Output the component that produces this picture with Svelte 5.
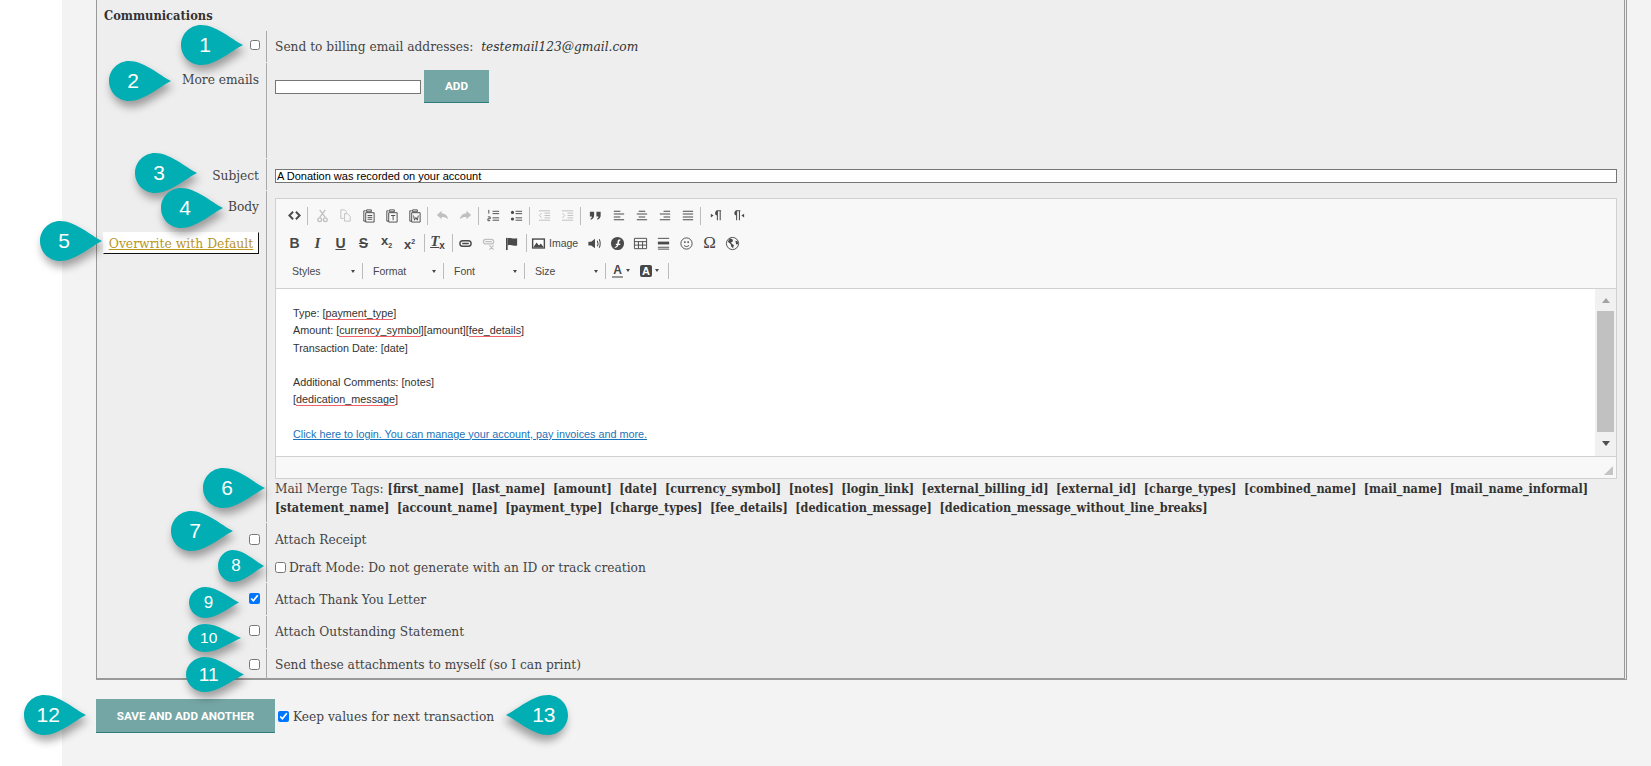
<script lang="ts">
  const INK = '#4a4a4a';

  // s = stroked path, f = filled path, t = real text glyph, off = greyed out
  const icons: Record<string, { s?: string; f?: string; w?: number; t?: string; sm?: string; off?: boolean; cls?: string }> = {
    source: { s: 'M6.500 4 2.500 8l4 4M9.500 4l4 4-4 4', w: 2 },
    cut: { s: 'M5 2l6 8M11 2l-6 8M3 12.500a2 2 0 1 0 4 0a2 2 0 1 0-4 0M9 12.500a2 2 0 1 0 4 0a2 2 0 1 0-4 0', off: true },
    copy: { s: 'M3 2h4l2 2v1M3 2v9h3M7 6h3l3 3v5H7z', off: true, w: 1 },
    paste: { s: 'M5 3H3v11h2M5 5h9v10H5zM6 2h5v2H6zM7 8h5M7 10h5M7 12h5', w: 1 },
    pastetext: { s: 'M5 3H3v11h2M5 5h9v10H5zM6 2h5v2H6zM7.500 8h4.500M9.700 8v5', w: 1 },
    pasteword: { s: 'M5 3H3v11h2M5 5h9v10H5zM6 2h5v2H6zM7 8l1 5 1.500-3 1.500 3 1-5', w: 1 },
    undo: { f: 'M7 3 2 7.500 7 12V9.500c3 0 5 .5 7 2.500-.5-4-3-6-7-6.300z', off: true },
    redo: { f: 'M9 3l5 4.500L9 12V9.500c-3 0-5 .5-7 2.500.5-4 3-6 7-6.300z', off: true },
    ol: { s: 'M7 3.500h7M7 6h7M7 10.500h7M7 13h7M3 2v4M2 9.500h2.500V11.500H2v2h2.500', w: 1 },
    ul: { s: 'M7 3.500h7M7 6h7M7 10.500h7M7 13h7', f: 'M2 4.700a1.700 1.700 0 1 0 3.400 0a1.700 1.700 0 1 0-3.400 0M2 11.700a1.700 1.700 0 1 0 3.400 0a1.700 1.700 0 1 0-3.400 0', w: 1 },
    outdent: { s: 'M2 3h12M8 5.500h6M8 8h6M8 10.500h6M2 13h12M5 5.500 2.500 8 5 10.500', w: 1, off: true },
    indent: { s: 'M2 3h12M8 5.500h6M8 8h6M8 10.500h6M2 13h12M2.500 5.500 5 8l-2.500 2.500', w: 1, off: true },
    quote: { f: 'M2 4h4.500v4c0 2-1 3.500-3.500 4.500l-.5-1c1-.5 1.700-1.500 1.700-2.500H2zM9 4h4.500v4c0 2-1 3.500-3.500 4.500l-.5-1c1-.5 1.700-1.500 1.700-2.500H9z' },
    left: { s: 'M3 3.500h7M3 6.500h11M3 9.500h7M3 12.500h11', w: 1.100 },
    center: { s: 'M5 3.500h7M3 6.500h11M5 9.500h7M3 12.500h11', w: 1.100 },
    right: { s: 'M7 3.500h7M3 6.500h11M7 9.500h7M3 12.500h11', w: 1.100 },
    justify: { s: 'M3 3.500h11M3 6.500h11M3 9.500h11M3 12.500h11', w: 1.100 },
    ltr: { s: 'M10 3v10M13 3v10M9 3h5', f: 'M10 3a2.500 2.500 0 0 0 0 5zM3 6l3 2-3 2z', w: 1.100 },
    rtl: { s: 'M6 3v10M9 3v10M5 3h5', f: 'M6 3a2.500 2.500 0 0 0 0 5zM14 6l-3 2 3 2z', w: 1.100 },
    bold: { t: 'B', cls: 'tb' },
    italic: { t: 'I', cls: 'ti' },
    underline: { t: 'U', cls: 'tu' },
    strike: { t: 'S', cls: 'ts' },
    sub: { t: 'x', sm: '2', cls: 'tx sub' },
    sup: { t: 'x', sm: '2', cls: 'tx sup' },
    clear: { t: 'T', sm: 'x', cls: 'tc' },
    link: { s: 'M5 5h6a3 3 0 0 1 0 6H5a3 3 0 0 1 0-6zM4.500 8h7', w: 1.500 },
    unlink: { s: 'M5 3.500h6a2.500 2.500 0 0 1 0 5H5a2.500 2.500 0 0 1 0-5zM4.500 6h7M9 10l4.500 4.500M13.500 10 9 14.500', w: 1.300, off: true },
    anchor: { s: 'M3 2v13', f: 'M4 2.500c3-1 5 1 10 0V10c-5 1-7-1-10 0z', w: 1.800 },
    audio: { s: 'M11 5c1 2 1 4 0 6M13 3.500c1.500 3 1.500 6 0 9', f: 'M1.500 6h3l4-3v10l-4-3h-3z', w: 1.100 },
    flash: { f: 'M1 8a7 7 0 1 0 14 0a7 7 0 1 0-14 0M11 3.500C7 3.500 8.500 6.800 7.700 8.200H6.200v1.500h1.200C7 11 6.200 11.400 5 11.700v1c3-.2 3.500-1.700 4-3H11V8.200H9.500c.3-1.500 0-3 1.500-3.200z' },
    table: { s: 'M1.500 2.500h13v11h-13zM1.500 6h13M1.500 9.700h13M5.800 6v7.500M10.200 6v7.500', w: 1 },
    hr: { s: 'M2 2.500h12M2 12h12M2 14h12', f: 'M2 6h12v3H2z', w: 1 },
    smile: { s: 'M2 8a6 6 0 1 0 12 0a6 6 0 1 0-12 0M5.300 10c1.400 1.600 4 1.600 5.400 0', f: 'M5.500 5.500h1.500v2H5.500zM9 5.500h1.500v2H9z', w: 1 },
    omega: { t: 'Ω', cls: 'to' },
    globe: { s: 'M1.500 8a6.500 6.500 0 1 0 13 0a6.500 6.500 0 1 0-13 0', f: 'M5 2.500l3 1 .5 2-2 1.500 1 1.500 2 1-1 3.500-2-2-.5-2.500L3 6zM11 5l2.500.5.500 3-2 .5z', w: 1 },
  };

  const rowOne = ['source', '|', 'cut', 'copy', 'paste', 'pastetext', 'pasteword', '|', 'undo', 'redo', '|', 'ol', 'ul', '|', 'outdent', 'indent', '|', 'quote', 'left', 'center', 'right', 'justify', '|', 'ltr', 'rtl'];
  const rowTwoA = ['bold', 'italic', 'underline', 'strike', 'sub', 'sup', '|', 'clear', '|', 'link', 'unlink', 'anchor', '|'];
  const rowTwoB = ['audio', 'flash', 'table', 'hr', 'smile', 'omega', 'globe'];
  const combos = ['Styles', 'Format', 'Font', 'Size'];

  const firstTags = ['first_name', 'last_name', 'amount', 'date', 'currency_symbol', 'notes', 'login_link', 'external_billing_id', 'external_id', 'charge_types', 'combined_name', 'mail_name', 'mail_name_informal'];
  const secondTags = ['statement_name', 'account_name', 'payment_type', 'charge_types', 'fee_details', 'dedication_message', 'dedication_message_without_line_breaks'];

  // callouts sit on top of the form, their place is the content
  const badges = [
    { n: 1, x: 181, y: 25, w: 62, h: 40, fs: 21 },
    { n: 2, x: 109, y: 61, w: 62, h: 40, fs: 21 },
    { n: 3, x: 135, y: 153, w: 62, h: 40, fs: 21 },
    { n: 4, x: 161, y: 188, w: 62, h: 40, fs: 21 },
    { n: 5, x: 40, y: 221, w: 62, h: 40, fs: 21 },
    { n: 6, x: 203, y: 468, w: 62, h: 40, fs: 21 },
    { n: 7, x: 171, y: 511, w: 62, h: 40, fs: 21 },
    { n: 8, x: 218, y: 550, w: 46, h: 32, fs: 17 },
    { n: 9, x: 189, y: 587, w: 50, h: 31, fs: 17 },
    { n: 10, x: 188, y: 624, w: 53, h: 28, fs: 15.500 },
    { n: 11, x: 186, y: 657, w: 58, h: 35, fs: 19 },
    { n: 12, x: 24, y: 695, w: 62, h: 40, fs: 21 },
    { n: 13, x: 506, y: 695, w: 62, h: 40, fs: 21, flip: true },
  ];
</script>

{#snippet toolIcon(name: string)}
  {@const ic = icons[name]}
  <span class="tool" class:off={ic.off}>
    {#if ic.t}
      <span class={'glyph ' + ic.cls}>{ic.t}{#if ic.sm}<small>{ic.sm}</small>{/if}</span>
    {:else}
      <svg width="15" height="15" viewBox="0 0 16 16">
        {#if ic.f}<path d={ic.f} fill={INK} fill-rule="evenodd" />{/if}
        {#if ic.s}<path d={ic.s} fill="none" stroke={INK} stroke-width={ic.w ?? 1.4} />{/if}
      </svg>
    {/if}
  </span>
{/snippet}

<div class="root">
  <div class="page">
    <div class="panel">
      <div class="title">Communications</div>

      <div class="row r1">
        <div class="label"><input type="checkbox" class="rowcheck small" /></div>
        <div class="cell">Send to billing email addresses: &nbsp;<em>testemail123@gmail.com</em></div>
      </div>

      <div class="row r2">
        <div class="label">More emails</div>
        <div class="cell email-cell">
          <input type="text" class="email-input" />
          <button class="add-btn">ADD</button>
        </div>
      </div>

      <div class="row r3">
        <div class="label">Subject</div>
        <div class="cell">
          <input type="text" class="subject-input" value="A Donation was recorded on your account" />
        </div>
      </div>

      <div class="row r4">
        <div class="label body-label">
          <div>Body</div>
          <button class="overwrite">Overwrite with Default</button>
        </div>
        <div class="cell">
          <div class="editor">
            <div class="toolbar">
              <div class="tb-row one">
                {#each rowOne as item}
                  {#if item === '|'}<span class="sep"></span>{:else}{@render toolIcon(item)}{/if}
                {/each}
              </div>
              <div class="tb-row two">
                {#each rowTwoA as item}
                  {#if item === '|'}<span class="sep"></span>{:else}{@render toolIcon(item)}{/if}
                {/each}
                <span class="image-btn">
                  <svg width="15" height="15" viewBox="0 0 16 16">
                    <path d="M1 2.500h14v11H1z" fill={INK} />
                    <path d="M2.500 4h11v8.500h-11z" fill="#fff" />
                    <path d="M2.500 12 6 7l2.500 3 2-2 3 4v.5h-11z" fill={INK} />
                  </svg>
                  <span class="image-text">Image</span>
                </span>
                {#each rowTwoB as item}{@render toolIcon(item)}{/each}
              </div>
              <div class="tb-row three">
                {#each combos as combo}
                  <span class="combo">{combo}<i class="caret"></i></span><span class="sep flat"></span>
                {/each}
                <span class="color-btn first"><span class="text-a">A</span><i class="caret"></i></span>
                <span class="color-btn"><span class="bg-a">A</span><i class="caret"></i></span>
                <span class="sep flat"></span>
              </div>
            </div>

            <div class="content">
              <div class="text">
                <p>Type: [<u>payment_type</u>]</p>
                <p>Amount: [<u>currency_symbol</u>][amount][<u>fee_details</u>]</p>
                <p>Transaction Date: [date]</p>
                <p>&nbsp;</p>
                <p>Additional Comments: [notes]</p>
                <p>[<u>dedication_message</u>]</p>
                <p>&nbsp;</p>
                <p><a href="#login">Click here to login. You can manage your account, pay invoices and more.</a></p>
              </div>
              <div class="scrollbar">
                <i class="arrow up"></i>
                <div class="thumb"></div>
                <i class="arrow down"></i>
              </div>
            </div>

            <div class="statusbar">
              <svg width="9" height="9" viewBox="0 0 9 9"><path d="M9 0v9H0z" fill="#c4c4c4" /></svg>
            </div>
          </div>

          <div class="tags">
            <span class="tags-label">Mail Merge Tags:</span>
            {#each firstTags as tag}<b>[{tag}]</b>{/each}<br />
            {#each secondTags as tag}<b>[{tag}]</b>{/each}
          </div>
        </div>
      </div>

      <div class="row r5">
        <div class="label"><input type="checkbox" class="rowcheck" /></div>
        <div class="cell">
          <div class="line-a">Attach Receipt</div>
          <label class="line-b"><input type="checkbox" />Draft Mode: Do not generate with an ID or track creation</label>
        </div>
      </div>

      <div class="row r6">
        <div class="label"><input type="checkbox" class="rowcheck" checked /></div>
        <div class="cell">Attach Thank You Letter</div>
      </div>

      <div class="row r6 r6b">
        <div class="label"><input type="checkbox" class="rowcheck" /></div>
        <div class="cell">Attach Outstanding Statement</div>
      </div>

      <div class="row r7">
        <div class="label"><input type="checkbox" class="rowcheck" /></div>
        <div class="cell">Send these attachments to myself (so I can print)</div>
      </div>
    </div>

    <div class="footer">
      <button class="save-btn">SAVE AND ADD ANOTHER</button>
      <label class="keep"><input type="checkbox" checked />Keep values for next transaction</label>
    </div>
  </div>

  {#each badges as b}
    <div class="badge" style="left:{b.x}px;top:{b.y}px;width:{b.w}px;height:{b.h}px">
      <svg class:flip={b.flip} viewBox="0 0 62 40" preserveAspectRatio="none">
        <path d="M62 20C50 14 35 0 20 0 9 0 0 9 0 20s9 20 20 20c15 0 30-14 42-20z" fill="#00aeb3" />
      </svg>
      <span class:flipnum={b.flip} style="font-size:{b.fs}px">{b.n}</span>
    </div>
  {/each}
</div>

<style>
  :global(body) {
    margin: 0;
    background: #fff;
  }

  .root {
    position: relative;
    height: 766px;
    overflow: hidden;
  }

  .page {
    margin-left: 62px;
    height: 766px;
    background: #f3f3f3;
    padding-left: 34px;
    font-family: 'DejaVu Serif', 'Liberation Serif', serif;
    font-stretch: condensed;
    font-size: 13.600px;
    color: #444;
    box-sizing: border-box;
  }

  .panel {
    width: 1531px;
    height: 680px;
    box-sizing: border-box;
    background: #eee;
    border-left: 1px solid #999;
    border-right: 3px double #999;
    border-bottom: 2px solid #999;
  }

  .title {
    height: 31px;
    padding: 8px 0 0 7px;
    box-sizing: border-box;
    font-size: 12.750px;
    font-weight: 700;
    color: #333;
  }

  .row {
    display: grid;
    grid-template-columns: 169px 1fr;
    margin-bottom: 1px;
  }

  .label {
    text-align: right;
    padding-right: 6px;
  }

  .cell {
    border-left: 1px solid #aaa;
    padding-left: 8px;
    padding-right: 7px;
  }

  .rowcheck {
    display: block;
    width: 11px;
    height: 11px;
    margin: 0 0 0 auto;
  }

  .rowcheck.small {
    width: 10px;
    height: 10px;
  }

  .r1 { height: 31px; }
  .r1 .label { padding-top: 9px; }
  .r1 .cell { padding-top: 7px; line-height: 16px; }
  .r1 em { color: #333; }

  .r2 { height: 95px; }
  .r2 .label { padding-top: 8px; padding-right: 7px; }
  .email-cell {
    display: flex;
    align-items: flex-start;
    gap: 3px;
    padding-top: 7px;
  }

  .email-input {
    width: 146px;
    height: 14px;
    margin-top: 10px;
    padding: 0;
    box-sizing: border-box;
    border: 1px solid #767676;
    background: #fff;
  }

  .add-btn,
  .save-btn {
    border: 0;
    border-bottom: 1px solid #2f7c7c;
    background: #75a6a6;
    color: #fff;
    font-family: 'Roboto', 'Liberation Sans', sans-serif;
    font-weight: 700;
    font-size: 11.700px;
    padding: 0;
  }

  .add-btn {
    width: 65px;
    height: 33px;
  }

  .r3 { height: 31px; }
  .r3 .label { padding-top: 8px; padding-right: 7px; }
  .r3 .cell { padding-top: 10px; }

  .subject-input {
    display: block;
    width: 100%;
    height: 14px;
    padding: 0 0 0 1px;
    box-sizing: border-box;
    border: 1px solid #767676;
    background: #fff;
    color: #000;
    font-family: 'Liberation Sans', sans-serif;
    font-size: 11px;
    outline: none;
  }

  .r4 { height: 331px; }
  .body-label { padding-top: 7px; padding-right: 7px; }

  .overwrite {
    display: block;
    margin: 18px 0 0 auto;
    width: 156px;
    height: 22px;
    padding: 0;
    box-sizing: border-box;
    border: 1px solid #fff;
    border-right-color: #111;
    border-bottom-color: #111;
    background: #fff;
    color: #b8961e;
    text-decoration: underline;
    font-family: inherit;
    font-stretch: inherit;
    font-size: 13.750px;
  }

  .r4 .cell { padding-top: 7px; }

  .editor {
    height: 281px;
    box-sizing: border-box;
    border: 1px solid #d1d1d1;
    background: #f8f8f8;
    display: flex;
    flex-direction: column;
    font-family: 'Liberation Sans', sans-serif;
  }

  .toolbar {
    height: 90px;
    flex: none;
    padding: 3px 0 0 7px;
    box-sizing: border-box;
    border-bottom: 1px solid #d1d1d1;
  }

  .tb-row {
    height: 27.500px;
    display: flex;
    align-items: center;
  }

  .tool {
    width: 23px;
    height: 18px;
    flex: none;
    display: flex;
    align-items: center;
    justify-content: center;
  }

  .tool.off {
    opacity: 0.32;
  }

  .sep {
    flex: none;
    width: 1px;
    height: 18px;
    background: #bcbcbc;
    margin: 0 3px 0 1px;
  }

  .two .sep {
    margin: 0 1px 0 3px;
  }

  .sep.flat {
    margin: 0;
    height: 16px;
  }

  .glyph {
    color: #474747;
    line-height: 16px;
    font-size: 14px;
    font-weight: 700;
  }

  .glyph small {
    font-size: 7px;
  }

  .ti { font-family: 'Liberation Serif', serif; font-style: italic; font-size: 15px; }
  .tu { text-decoration: underline; }
  .ts { text-decoration: line-through; }
  .tx { font-size: 13px; }
  .sub small { vertical-align: -3px; }
  .sup small { vertical-align: 5px; }
  .tc { font-family: 'Liberation Serif', serif; font-style: italic; font-size: 15px; text-decoration: underline; }
  .tc small { font-family: 'Liberation Sans', sans-serif; font-style: normal; font-size: 10px; vertical-align: -3px; }
  .to { font-family: 'Liberation Serif', serif; font-size: 17px; font-weight: 400; }

  .image-btn {
    flex: none;
    width: 55px;
    display: flex;
    align-items: center;
    gap: 3px;
    padding-left: 3px;
    box-sizing: border-box;
  }

  .image-text {
    font-size: 10.500px;
    color: #474747;
  }

  .three {
    margin-left: -1px;
  }

  .combo {
    position: relative;
    flex: none;
    width: 80px;
    padding-left: 10px;
    box-sizing: border-box;
    font-size: 10.500px;
    color: #484848;
  }

  .combo .caret {
    position: absolute;
    right: 7px;
    top: 5px;
  }

  .caret {
    display: inline-block;
    border-top: 3px solid #474747;
    border-left: 2.500px solid transparent;
    border-right: 2.500px solid transparent;
  }

  .color-btn {
    flex: none;
    width: 29px;
    display: flex;
    align-items: center;
    gap: 3px;
    padding-left: 1px;
    box-sizing: border-box;
  }

  .color-btn.first {
    width: 33px;
    padding-left: 6px;
  }

  .text-a {
    width: 11px;
    font-size: 12px;
    font-weight: 700;
    line-height: 12px;
    text-align: center;
    color: #474747;
    border-bottom: 2px solid #999;
  }

  .bg-a {
    width: 12px;
    height: 12px;
    font-size: 11px;
    font-weight: 700;
    line-height: 12px;
    text-align: center;
    color: #fff;
    background: #474747;
    border-radius: 2px;
  }

  .content {
    height: 168px;
    flex: none;
    display: flex;
    background: #fff;
    box-sizing: border-box;
    border-bottom: 1px solid #d1d1d1;
  }

  .text {
    flex: 1;
    padding: 16px 0 0 17px;
    font-size: 10.800px;
    color: #333;
    line-height: 17.250px;
  }

  .text p {
    margin: 0;
  }

  .text u {
    text-decoration: none;
    border-bottom: 1px solid #f0616a;
  }

  .text a {
    color: #1a73b8;
  }

  .scrollbar {
    width: 21px;
    flex: none;
    background: #f1f1f1;
    display: flex;
    flex-direction: column;
    align-items: center;
    padding-top: 9px;
    box-sizing: border-box;
  }

  .arrow {
    width: 0;
    border-left: 4.500px solid transparent;
    border-right: 4.500px solid transparent;
  }

  .arrow.up {
    border-bottom: 5px solid #a3a3a3;
  }

  .arrow.down {
    margin-top: 9px;
    border-top: 5px solid #505050;
  }

  .thumb {
    width: 17px;
    height: 121px;
    margin-top: 8px;
    background: #c1c1c1;
  }

  .statusbar {
    flex: 1;
    display: flex;
    justify-content: flex-end;
    align-items: flex-end;
    padding: 0 3px 3px 0;
  }

  .tags {
    line-height: 18px;
    white-space: nowrap;
  }

  .tags b {
    margin-right: 7.500px;
    font-size: 12.500px;
    font-weight: 700;
    color: #333;
  }

  .r5 { height: 59px; }
  .r5 .label { padding-top: 11px; }
  .line-a { padding-top: 8px; line-height: 16px; }

  .line-b {
    display: flex;
    align-items: center;
    gap: 3px;
    margin-top: 12px;
    line-height: 16px;
  }

  .line-b input,
  .keep input {
    width: 11px;
    height: 11px;
    margin: 0;
  }

  .r6 { height: 32px; }
  .r6 .label { padding-top: 10px; }
  .r6 .cell { padding-top: 8px; line-height: 16px; }
  .r6b .label { padding-top: 9px; }
  .r6b .cell { padding-top: 7px; }

  .r7 { height: 30px; margin-bottom: 0; }
  .r7 .label { padding-top: 10px; }
  .r7 .cell { padding-top: 7px; line-height: 16px; }

  .footer {
    display: flex;
    align-items: center;
    margin-top: 19px;
  }

  .save-btn {
    width: 179px;
    height: 34px;
  }

  .keep {
    display: flex;
    align-items: center;
    gap: 4px;
    margin-left: 3px;
  }

  .badge {
    position: absolute;
  }

  .badge svg {
    display: block;
    width: 100%;
    height: 100%;
    filter: drop-shadow(2px 6px 4px rgba(0, 0, 0, 0.35));
    overflow: visible;
  }

  .badge svg.flip {
    transform: scaleX(-1);
  }

  .badge span {
    position: absolute;
    left: 0;
    top: 0;
    width: 78%;
    height: 100%;
    display: flex;
    align-items: center;
    justify-content: center;
    color: #fff;
    font-family: 'Liberation Sans', sans-serif;
  }

  .badge span.flipnum {
    left: 22%;
  }
</style>
